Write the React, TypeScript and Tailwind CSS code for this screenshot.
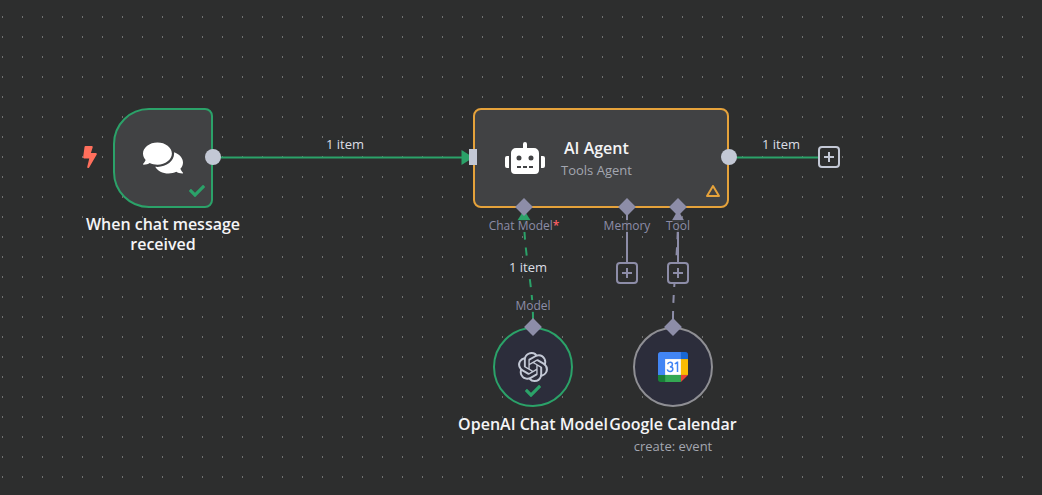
import type { ReactNode } from "react";
import { FaBolt, FaCheck, FaComments, FaRobot } from "react-icons/fa";
import { SiOpenai } from "react-icons/si";

function PlusButton({ label }: { label: string }) {
  return (
    <button
      type="button"
      aria-label={label}
      className="flex size-[22px] items-center justify-center rounded border-2 border-current bg-[#2d2e2e]"
    >
      <svg viewBox="0 0 10 10" className="size-[10px]" stroke="currentColor" strokeWidth="2">
        <path d="M5 0v10M0 5h10" />
      </svg>
    </button>
  );
}

function EdgeLabel({ className, children }: { className: string; children: ReactNode }) {
  return (
    <span className={`absolute -translate-x-1/2 bg-[#2d2e2e]/85 whitespace-nowrap leading-3 ${className}`}>
      {children}
    </span>
  );
}

function InputPort({ className, required, addLabel, children }: {
  className: string;
  required?: boolean;
  addLabel?: string;
  children: string;
}) {
  return (
    <li className={`flex flex-col items-center text-[#8d8da8] ${className}`}>
      <span className="size-3 rotate-45 scale-105 bg-[#8d8da8]" />
      <span className="mt-[7px] bg-[#2d2e2e]/85 text-xs leading-3 whitespace-nowrap">
        {children}
        {required && <span className="font-semibold text-[#ff5f64]">*</span>}
      </span>
      {addLabel && (
        <div className="mt-[30px]">
          <PlusButton label={addLabel} />
        </div>
      )}
    </li>
  );
}

function SubNode({ className, ring, name, detail, children }: {
  className: string;
  ring: string;
  name: string;
  detail?: string;
  children: ReactNode;
}) {
  return (
    <section className={`absolute flex w-40 flex-col items-center ${className}`}>
      <div className={`relative flex size-20 items-center justify-center rounded-full border-2 bg-[#2c2d3b] ${ring}`}>
        {children}
        <span className="absolute -top-2 size-3 rotate-45 scale-105 bg-[#8d8da8]" />
      </div>
      <h2 className="mt-[7px] text-base leading-5 font-semibold whitespace-nowrap">{name}</h2>
      {detail && <p className="mt-1 text-[13px] leading-4 text-[#a3a6b0]">{detail}</p>}
    </section>
  );
}

function CalendarIcon() {
  return (
    <svg viewBox="0 0 200 200" className="size-[30px]">
      <path fill="#fff" d="M47 47h106v106H47z" />
      <path fill="#ea4335" d="M153 200l47-47h-47z" />
      <path fill="#fbbc04" d="M200 47h-47v106h47z" />
      <path fill="#34a853" d="M153 153H47v47h106z" />
      <path fill="#188038" d="M0 153v31c0 9 7 16 16 16h31v-47z" />
      <path fill="#1967d2" d="M200 47V16c0-9-7-16-16-16h-31v47z" />
      <path fill="#4285f4" d="M153 0H16C7 0 0 7 0 16v137h47V47h106z" />
      <path
        fill="none"
        stroke="#4285f4"
        strokeWidth="10"
        d="M64 82c5-18 32-17 32 1 0 10-8 15-17 15 11 0 20 5 20 16 0 21-32 22-37 2M112 80l16-11h2v64"
      />
    </svg>
  );
}

function Edges() {
  return (
    <svg className="absolute inset-0 size-full" fill="none" strokeWidth="2">
      <defs>
        <pattern id="dots" width="20" height="20" patternUnits="userSpaceOnUse">
          <rect x="2" y="16" width="1" height="2" fill="#707171" />
        </pattern>
      </defs>
      <rect width="100%" height="100%" fill="url(#dots)" />
      <path stroke="#2ba269" d="M213 157.5H464M729 157.5H819" />
      <path fill="#2ba269" d="M461.5 150l12 7.5-12 7.5z" />
      <path stroke="#8d8da8" d="M627 208V263M678 208V263" />
      <path stroke="#2ba269" strokeDasharray="8 8" d="M533 319C533 285 524 255 524 216" />
      <path fill="#2ba269" d="M524 210l7 11h-14z" />
      <path stroke="#8d8da8" strokeDasharray="8 8" d="M673 319C673 285 678 255 678 216" />
      <path fill="#8d8da8" d="M678 210l7 12h-14z" />
    </svg>
  );
}

export default function App() {
  return (
    <main className="relative min-h-screen w-full overflow-hidden bg-[#2d2e2e] font-['Open_Sans',sans-serif] text-[#f4f4f6]">
      <Edges />

      <section className="absolute left-[75px] top-[108px] flex w-44 flex-col items-center">
        <div className="relative flex size-[100px] items-center justify-center rounded-l-[36px] rounded-r-lg border-2 border-[#2ba269] bg-[#414244]">
          <FaBolt className="absolute right-full mr-3.5 mb-0.5 size-[22px] text-[#ff6f5c]" />
          <FaComments className="size-10 text-white" />
          <FaCheck className="absolute right-1.5 bottom-[7px] size-4 text-[#2ba269]" />
          <span className="absolute -right-2.5 mb-0.5 size-4 rounded-full bg-[#c3c8d5]" />
        </div>
        <h2 className="mt-1.5 text-center text-base leading-5 font-semibold">When chat message received</h2>
      </section>

      <EdgeLabel className="left-[345px] top-[138px] text-[13px] text-[#dcdee5]">1 item</EdgeLabel>

      <section className="absolute left-[473px] top-[108px] w-64">
        <div className="relative flex h-[100px] items-center rounded-lg border-2 border-[#e5a23b] bg-[#414244] pl-[30px]">
          <FaRobot className="size-10 text-white" />
          <div className="ml-4 flex flex-col items-center gap-1">
            <h2 className="text-base leading-5 font-semibold">AI Agent</h2>
            <p className="text-[13px] leading-4 text-[#a3a6b0]">Tools Agent</p>
          </div>
          <svg
            viewBox="0 0 14 12"
            className="absolute right-[7px] bottom-[9px] h-3 w-[14px]"
            fill="none"
            stroke="#e5a23b"
            strokeWidth="2"
            strokeLinejoin="round"
          >
            <path d="M7 1L13 11H1z" />
          </svg>
          <span className="absolute -left-1.5 mb-0.5 h-4 w-2 bg-[#c3c8d5]" />
          <span className="absolute -right-2.5 mb-0.5 size-4 rounded-full bg-[#c3c8d5]" />
        </div>
        <ul className="relative -mt-[7px] flex">
          <InputPort className="mr-[26px] w-[102px]" required>
            Chat Model
          </InputPort>
          <InputPort className="w-[52px]" addLabel="Add memory">
            Memory
          </InputPort>
          <InputPort className="w-[50px]" addLabel="Add tool">
            Tool
          </InputPort>
        </ul>
      </section>

      <EdgeLabel className="left-[781px] top-[138px] text-[13px] text-[#dcdee5]">1 item</EdgeLabel>
      <div className="absolute left-[818px] top-[146px] text-[#c3c8d5]">
        <PlusButton label="Add next node" />
      </div>

      <EdgeLabel className="left-[528px] top-[261px] text-[13px] text-[#dcdee5]">1 item</EdgeLabel>
      <EdgeLabel className="left-[533px] top-[300px] text-xs text-[#8d8da8]">Model</EdgeLabel>

      <SubNode className="left-[453px] top-[327px]" ring="border-[#2ba269]" name="OpenAI Chat Model">
        <SiOpenai className="size-[30px] text-[#c3c8d5]" />
        <FaCheck className="absolute bottom-1.5 size-4 text-[#2ba269]" />
      </SubNode>

      <SubNode
        className="left-[593px] top-[327px]"
        ring="border-[#8f8f94]"
        name="Google Calendar"
        detail="create: event"
      >
        <CalendarIcon />
      </SubNode>
    </main>
  );
}
